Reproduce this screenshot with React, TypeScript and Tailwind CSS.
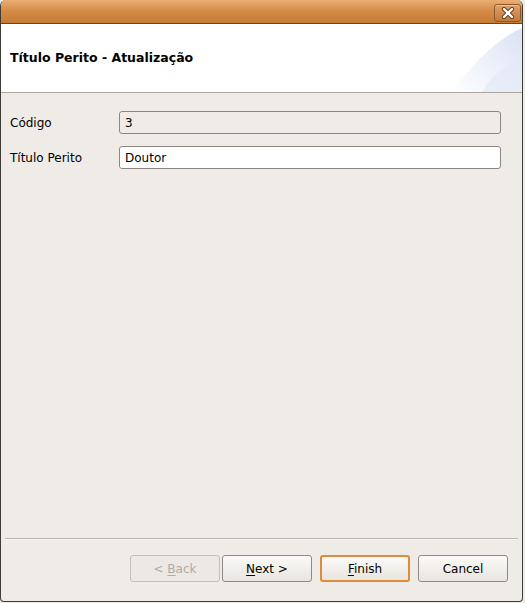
import React from 'react';

const font = { fontFamily: '"DejaVu Sans", "Liberation Sans", sans-serif' };

const CloseButton: React.FC = () => (
  <div className="w-[27px] h-[18px] rounded-[3px] border border-[#8a5a2c] bg-gradient-to-b from-[#dea06a] to-[#c57a3b] flex items-center justify-center shadow-[inset_0_1px_0_rgba(255,255,255,0.35)]">
    <svg width="14" height="12" viewBox="0 0 14 12">
      <path d="M3 2 L11 10 M11 2 L3 10" stroke="#5a3a1c" strokeWidth="4.2" strokeLinecap="round" />
      <path d="M3 2 L11 10 M11 2 L3 10" stroke="#ffffff" strokeWidth="2.4" strokeLinecap="round" />
    </svg>
  </div>
);

interface WizardButtonProps {
  label: string;
  mnemonic?: number;
  disabled?: boolean;
  primary?: boolean;
}

const WizardButton: React.FC<WizardButtonProps> = ({ label, mnemonic, disabled, primary }) => {
  const hasMnemonic = mnemonic !== undefined;
  return (
    <button
      type="button"
      disabled={disabled}
      className={`w-[90px] h-[27px] rounded-[3px] text-[12px] flex items-center justify-center ${
        disabled
          ? 'border border-[#c4bfb9] bg-[#ece8e3] text-[#b0aba5]'
          : primary
          ? 'border-2 border-[#e08a3c] bg-gradient-to-b from-[#fbfaf8] to-[#e9e5df] text-black'
          : 'border border-[#8f8a84] bg-gradient-to-b from-[#fbfaf8] to-[#e9e5df] text-black'
      }`}
    >
      {hasMnemonic ? (
        <span className="whitespace-pre">
          {label.slice(0, mnemonic)}
          <span className="underline underline-offset-2">{label.charAt(mnemonic!)}</span>
          {label.slice(mnemonic! + 1)}
        </span>
      ) : (
        <span className="whitespace-pre">{label}</span>
      )}
    </button>
  );
};

export default function App() {
  return (
    <div className="w-[525px] h-[603px] bg-[#efebe7]" style={font}>
      <div className="w-[523px] h-[602px] flex flex-col rounded-t-[6px] rounded-b-[4px] overflow-hidden border-l border-r border-b border-[#3f3b36] bg-[#efebe7]">
        {/* title bar */}
        <div className="h-[24px] shrink-0 flex items-start justify-end pt-[4px] pr-[1px] border-b border-[#6b4522] bg-gradient-to-b from-[#ebae72] via-[#d38a45] to-[#c77c36]">
          <CloseButton />
        </div>

        {/* header */}
        <div className="relative h-[69px] shrink-0 bg-white border-b border-[#aaa59f] flex items-center pl-[9px]">
          <span className="text-[12.5px] font-bold text-black">Título Perito - Atualização</span>
          <svg className="absolute right-0 top-0" width="80" height="68" viewBox="0 0 80 68">
            <defs>
              <linearGradient id="sw" x1="0" y1="1" x2="1" y2="0">
                <stop offset="0" stopColor="#ffffff" />
                <stop offset="1" stopColor="#d9e2f4" />
              </linearGradient>
            </defs>
            <path d="M10 68 C 30 40, 55 15, 80 4 L80 68 Z" fill="url(#sw)" />
            <path d="M40 68 C 50 50, 65 40, 80 36 L80 68 Z" fill="#e3e9f6" opacity="0.7" />
          </svg>
        </div>

        {/* body */}
        <div className="flex-1 flex flex-col">
          <div className="flex-1 pt-[18px] pl-[9px] pr-[21px] flex flex-col gap-[12px] text-[12px] text-black">
            <div className="flex items-center">
              <span className="w-[109px]">Código</span>
              <div className="flex-1 h-[23px] rounded-[3px] border border-[#8c8782] bg-[#efebe7] flex items-center pl-[5px]">3</div>
            </div>
            <div className="flex items-center">
              <span className="w-[109px]">Título Perito</span>
              <div className="flex-1 h-[23px] rounded-[3px] border border-[#8c8782] bg-white flex items-center pl-[5px]">Doutor</div>
            </div>
          </div>

          <div className="mx-[4px] border-t border-[#b9b4ae] border-b border-b-[#f8f6f4]" />

          <div className="flex justify-end pt-[15px] pb-[19px] pr-[14px]">
            <div className="flex gap-[2px]">
              <WizardButton label="< Back" mnemonic={2} disabled />
              <WizardButton label="Next >" mnemonic={0} />
            </div>
            <div className="flex gap-[8px] ml-[8px]">
              <WizardButton label="Finish" mnemonic={0} primary />
              <WizardButton label="Cancel" />
            </div>
          </div>
        </div>
      </div>
    </div>
  );
}
